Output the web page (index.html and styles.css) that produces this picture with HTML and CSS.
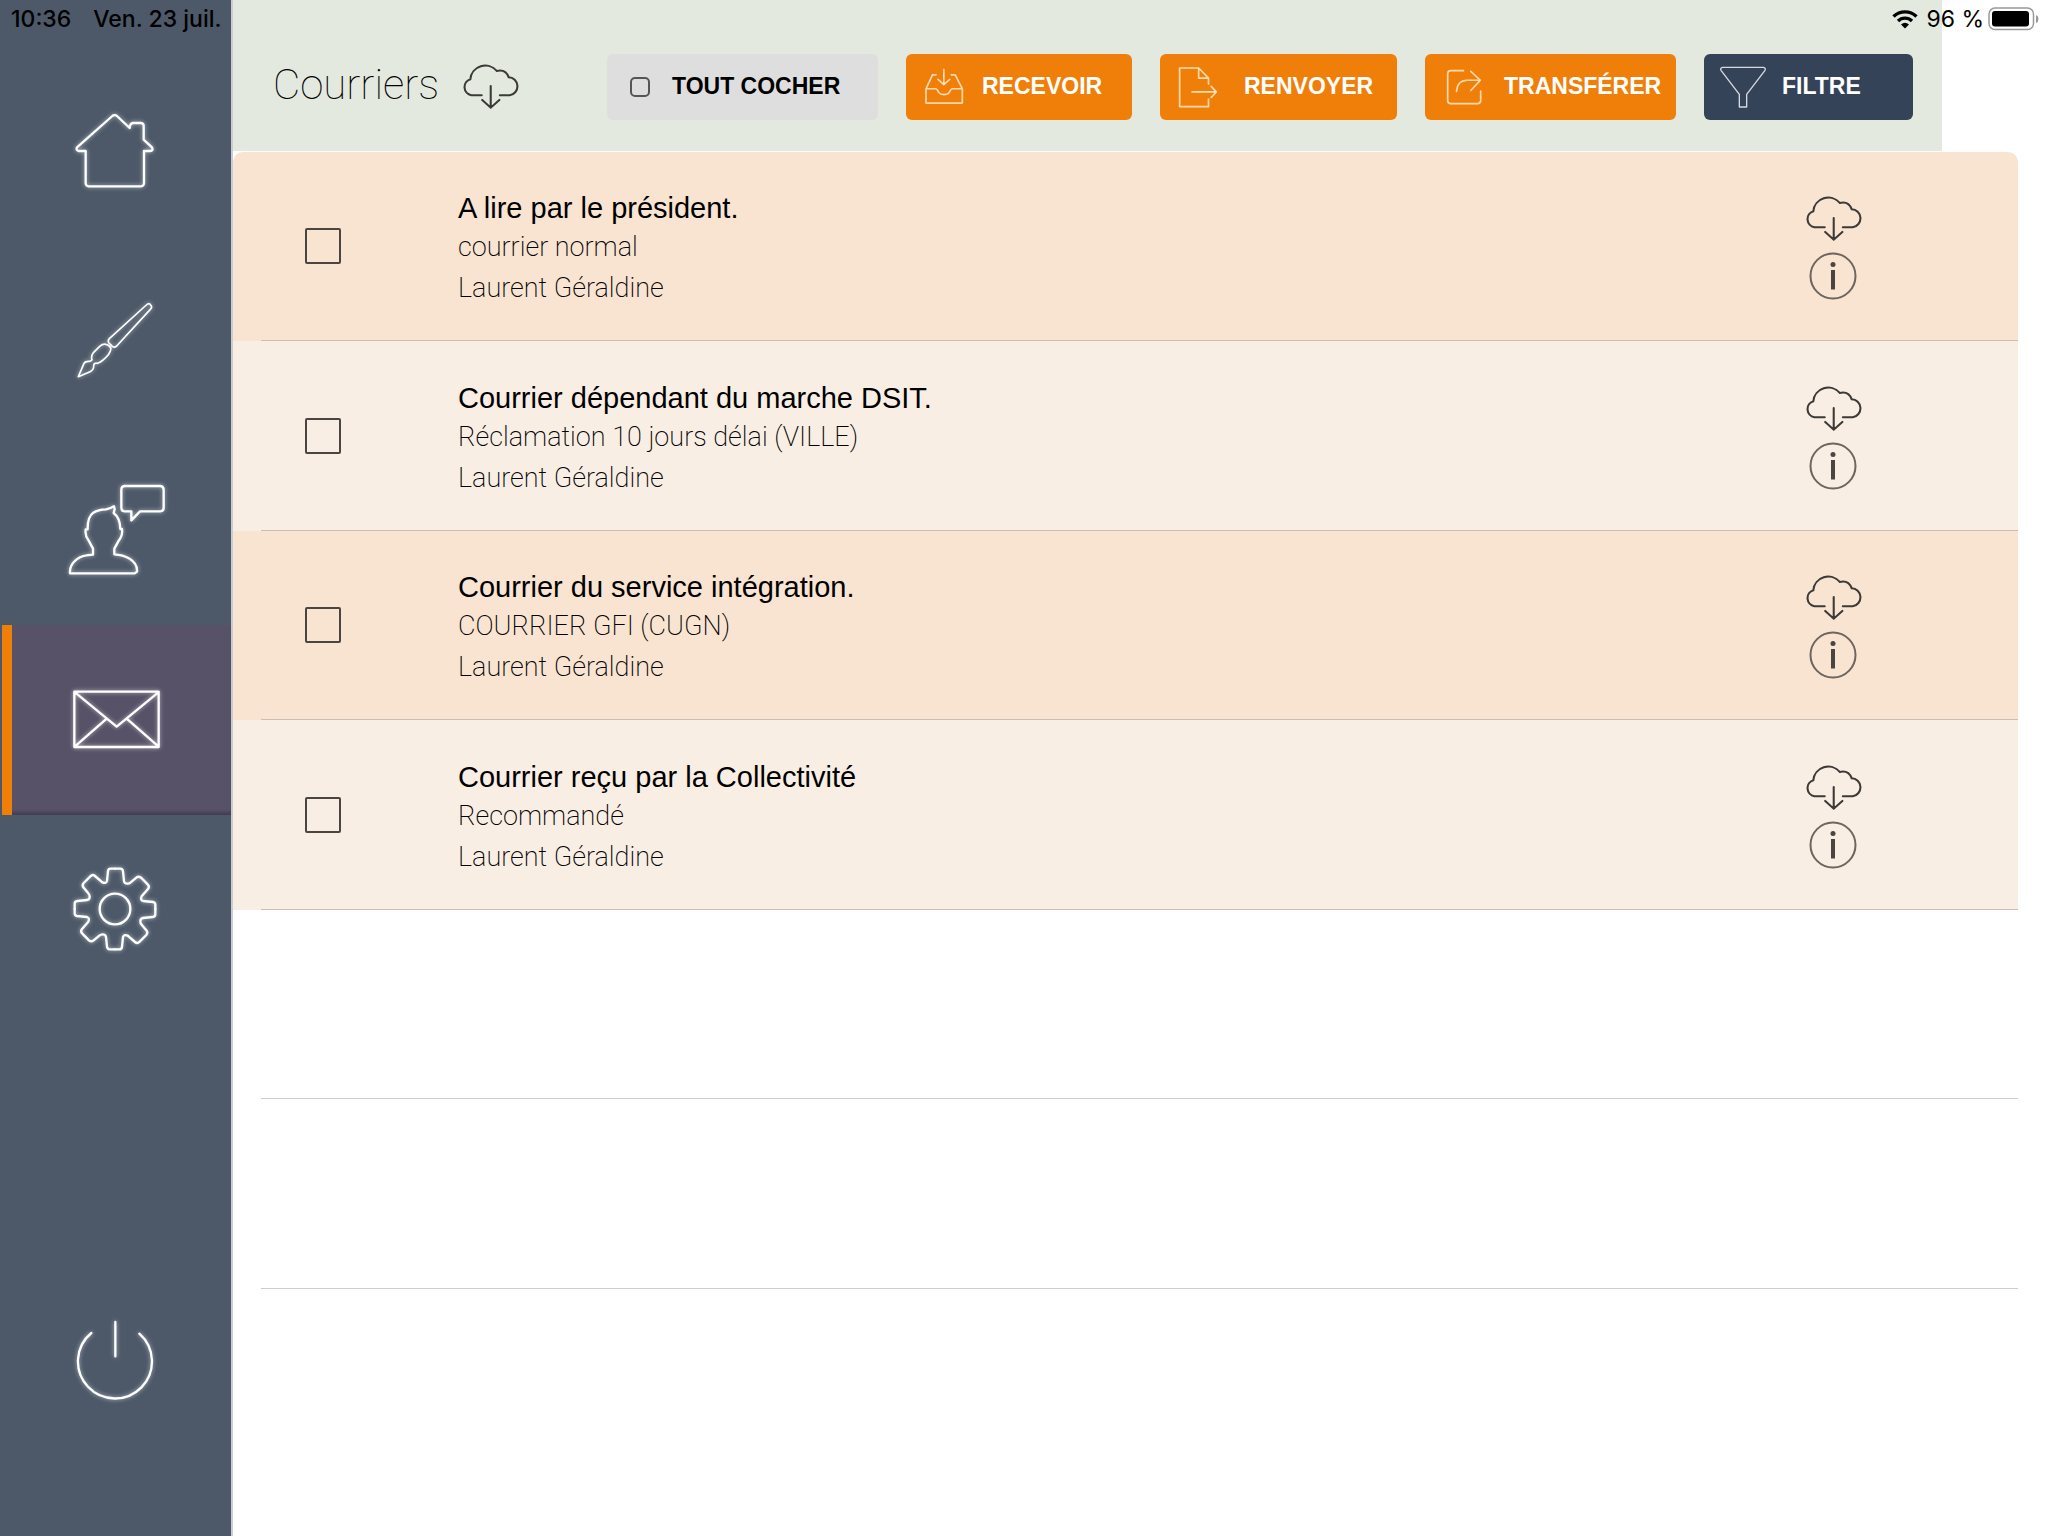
FILE: index.html
```html
<!DOCTYPE html>
<html lang="fr">
<head>
<meta charset="utf-8">
<meta name="viewport" content="width=device-width, initial-scale=1">
<title>Courriers</title>
<link rel="stylesheet" href="styles.css">
</head>
<body>
<svg class="sprite" aria-hidden="true">
  <symbol id="cloud" viewBox="0 0 56 44">
    <path d="M20 30H10A8 8 0 0 1 9 14.500A14.500 14.500 0 0 1 34.500 6.500Q43 4.500 46 12.500A8.800 8.800 0 0 1 47 30H37.500M28.700 21V42M20.500 34.500L28.700 42L37 34.500"/>
  </symbol>
  <symbol id="info" viewBox="0 0 48 48">
    <circle class="ring" cx="24" cy="24" r="22.500"/>
    <circle class="dot" cx="24" cy="12.500" r="2.500"/>
    <path class="dot" d="M22 18H26V37.500H22Z"/>
  </symbol>
</svg>

<div class="status">
  <span class="status-time">10:36</span>
  <span class="status-date">Ven. 23 juil.</span>
  <span class="status-right">
    <svg class="wifi" viewBox="0 0 26 20" aria-hidden="true">
      <path d="M1.500 7.500A16.500 16.500 0 0 1 24.500 7.500M6 12A10 10 0 0 1 20 12" fill="none" stroke="#000" stroke-width="3.400"/>
      <path d="M13 19.500L9 15.500Q13 12 17 15.500Z"/>
    </svg>
    <span>96 %</span>
    <svg class="battery" viewBox="0 0 51 24" aria-hidden="true">
      <rect x="1" y="1" width="44.500" height="21.500" rx="6" fill="#fff" stroke="#999" stroke-width="1.500"/>
      <rect x="4" y="4" width="37" height="15.500" rx="3"/>
      <path d="M48 8Q50.500 9 50.500 12T48 16Z" fill="#999"/>
    </svg>
  </span>
</div>

<div class="app">
  <nav class="sidebar" aria-label="Navigation">
    <a class="nav-item" href="#accueil" aria-label="Accueil">
      <svg width="90" height="84" viewBox="90 86 270 252"><path d="M217 107Q224 102 231 107L269 143Q270 129 279 128H303Q311 129 311 137V178L336 201Q341 211 330 212H312V309Q311 317 303 318H146Q138 317 137 309V212H117Q107 210 111 201Z"/></svg>
    </a>
    <a class="nav-item" href="#signature" aria-label="Signature">
      <svg width="80" height="80" viewBox="104 660 240 240"><path class="fine" d="M318 675Q326 667 331 675Q337 681 330 688L229 798Q222 804 216 799L206 789Q201 783 207 776ZM196 793Q188 791 178 799L160 817Q151 828 155 839Q151 845 144 844Q134 844 131 850L114 890L149 875Q161 870 160 856Q162 848 172 850Q188 843 204 824Q214 809 211 803Q204 793 196 793Z"/></svg>
    </a>
    <a class="nav-item" href="#contacts" aria-label="Contacts">
      <svg width="100" height="96" viewBox="195 65 300 288"><path d="M373 77H481Q491 78 491 88V142Q491 152 481 153H420L394 180V153H373Q364 152 364 142V88Q364 78 373 77ZM210 339Q208 315 229 298Q246 284 279 283V265L266 241Q254 225 257 207H263Q262 170 280 157Q294 148 318 147Q333 144 342 138L344 146L341 158Q360 172 361 206H366Q369 226 355 243L343 265V282Q369 283 389 295Q413 310 411 334L404 339Z"/></svg>
    </a>
    <a class="nav-item active" href="#courriers" aria-label="Courriers" aria-current="page">
      <svg width="96" height="64" viewBox="204 681 288 192"><path d="M223 695H476V861H223ZM225 697L350 800L475 697M225 859L320 776M475 859L380 776"/></svg>
    </a>
    <a class="nav-item" href="#reglages" aria-label="Réglages">
      <svg width="90" height="90" viewBox="89 73 270 270">
        <defs><path id="tooth" d="M224 87H240Q247 87 248 95L251 124Q252 132 261 132Q267 132 271 128L288 114Q295 108 302 114L322 134Q329 141 323 148L304 170Q299 181 308 184L338 187Q345 188 345 195V208"/></defs>
        <use href="#tooth"/><use href="#tooth" transform="rotate(90 224 208)"/><use href="#tooth" transform="rotate(180 224 208)"/><use href="#tooth" transform="rotate(270 224 208)"/>
        <circle cx="224" cy="208" r="46"/>
      </svg>
    </a>
    <button class="nav-item power" type="button" aria-label="Déconnexion">
      <svg width="84" height="88" viewBox="98 50 252 264"><path d="M225 68V171M153 101A111 111 0 1 0 297 103"/></svg>
    </button>
  </nav>

  <main class="main">
    <header class="toolbar">
      <h1>Courriers</h1>
      <button class="icon-btn" type="button" aria-label="Tout télécharger"><svg class="cloud"><use href="#cloud"/></svg></button>
      <div class="actions">
        <label class="btn check-all"><input type="checkbox">TOUT COCHER</label>
        <button class="btn receive" type="button">
          <svg width="40" height="38" viewBox="972 66 123 117"><path d="M1009 87H998L978 130V174H1090V130L1068 87H1056M978 130H1008Q1014 132 1017 141Q1022 148 1033 148Q1045 148 1050 141Q1053 132 1059 130H1090M1033 70V117M1015 101L1033 117L1051 101"/></svg>RECEVOIR</button>
        <button class="btn resend" type="button">
          <svg width="40" height="42" viewBox="86 57 120 128"><path d="M178 112V94L148 63H90V181H178V158M148 63V94H178M128 136H202M186 119L202 136L186 153"/></svg>RENVOYER</button>
        <button class="btn transfer" type="button">
          <svg width="36" height="36" viewBox="890 69 109 109"><path d="M943 74H905Q895 74 895 84V164Q895 174 905 174H985Q995 174 995 164V136M922 137Q924 103 955 103H993M965 76L994 103L965 134"/></svg>TRANSFÉRER</button>
        <button class="btn filter" type="button">
          <svg width="46" height="42" viewBox="182 195 138 126"><path d="M190 199H312Q320 201 317 208L262 280V318H240V280L185 208Q182 201 190 199Z"/></svg>FILTRE</button>
      </div>
    </header>

    <ul class="list">
      <li class="row"><div class="row-body">
        <input type="checkbox" id="c1">
        <label class="text" for="c1"><strong>A lire par le président.</strong><span>courrier normal</span><span>Laurent Géraldine</span></label>
        <div class="row-actions"><button class="icon-btn" type="button" aria-label="Télécharger"><svg class="cloud"><use href="#cloud"/></svg></button><button class="icon-btn" type="button" aria-label="Informations"><svg class="info"><use href="#info"/></svg></button></div>
      </div></li>
      <li class="row"><div class="row-body">
        <input type="checkbox" id="c2">
        <label class="text" for="c2"><strong>Courrier dépendant du marche DSIT.</strong><span>Réclamation 10 jours délai (VILLE)</span><span>Laurent Géraldine</span></label>
        <div class="row-actions"><button class="icon-btn" type="button" aria-label="Télécharger"><svg class="cloud"><use href="#cloud"/></svg></button><button class="icon-btn" type="button" aria-label="Informations"><svg class="info"><use href="#info"/></svg></button></div>
      </div></li>
      <li class="row"><div class="row-body">
        <input type="checkbox" id="c3">
        <label class="text" for="c3"><strong>Courrier du service intégration.</strong><span>COURRIER GFI (CUGN)</span><span>Laurent Géraldine</span></label>
        <div class="row-actions"><button class="icon-btn" type="button" aria-label="Télécharger"><svg class="cloud"><use href="#cloud"/></svg></button><button class="icon-btn" type="button" aria-label="Informations"><svg class="info"><use href="#info"/></svg></button></div>
      </div></li>
      <li class="row"><div class="row-body">
        <input type="checkbox" id="c4">
        <label class="text" for="c4"><strong>Courrier reçu par la Collectivité</strong><span>Recommandé</span><span>Laurent Géraldine</span></label>
        <div class="row-actions"><button class="icon-btn" type="button" aria-label="Télécharger"><svg class="cloud"><use href="#cloud"/></svg></button><button class="icon-btn" type="button" aria-label="Informations"><svg class="info"><use href="#info"/></svg></button></div>
      </div></li>
      <li class="row empty"><div class="row-body"></div></li>
      <li class="row empty"><div class="row-body"></div></li>
    </ul>
  </main>
</div>
</body>
</html>
```
FILE: styles.css
```css
* { box-sizing: border-box; }

body {
  margin: 0;
  background: #fff;
  color: #000;
  font-family: "Liberation Sans", Arial, sans-serif;
}

button, input { margin: 0; font: inherit; color: inherit; }
button { border: 0; padding: 0; background: none; cursor: pointer; }

.sprite { position: absolute; width: 0; height: 0; }

/* System status bar, laid over the page */
.status {
  position: absolute;
  top: 0;
  left: 0;
  right: 0;
  z-index: 1;
  display: flex;
  align-items: center;
  height: 38px;
  padding: 0 9px 0 11px;
  font: 500 23px/38px Inter, sans-serif;
}
.status-date { margin-left: 22px; }
.status-right {
  display: flex;
  align-items: center;
  margin-left: auto;
  gap: 4px;
  font-weight: 400;
}
.wifi { width: 26px; height: 20px; margin-right: 4px; }
.battery { width: 51px; height: 24px; }

.app { display: flex; min-height: 100vh; }

/* Sidebar */
.sidebar {
  display: flex;
  flex-direction: column;
  flex: none;
  width: 233px;
  padding: 57px 0 80px;
  background: #4d5969;
  border-right: 2px solid #c9cdd2;
}
.nav-item {
  display: flex;
  align-items: center;
  justify-content: center;
  height: 189px;
  padding: 0 2px 2px 0;
}
.nav-item:nth-child(even) { height: 190px; }
.nav-item svg {
  fill: none;
  stroke: #fff;
  stroke-width: 7;
  stroke-linecap: round;
  stroke-linejoin: round;
  filter: drop-shadow(0 0 2px rgba(255, 255, 255, .6));
}
.nav-item svg .fine { stroke-width: 5; }
.nav-item.active {
  margin-left: 2px;
  background: #575267;
  box-shadow: inset 10px 0 #f07f09, inset 0 -4px 3px -1px #443f54;
}
.power { margin-top: auto; }

/* Toolbar */
.main { flex: 1; min-width: 0; }
.toolbar {
  display: flex;
  align-items: center;
  height: 152px;
  margin-right: 106px;
  padding: 22px 29px 0 40px;
  background: #e3e9df;
  border-bottom: 1px solid #fff;
}
h1 {
  margin: 0 22px 4px 0;
  font: 100 42px/52px Roboto, sans-serif;
}
.icon-btn { display: block; line-height: 0; }
.cloud, .info { fill: none; stroke: #3c3a38; stroke-width: 2; stroke-linecap: round; }
.cloud { width: 58px; height: 46px; }
.info { width: 48px; height: 48px; }
.ring { stroke: #6e655e; }
.dot { fill: #4a4541; stroke: none; }

.actions { display: flex; gap: 28px; margin-left: auto; }
.btn {
  display: flex;
  align-items: center;
  height: 66px;
  border-radius: 6px;
  background: #f07f09;
  color: #fff;
  font-size: 23px;
  font-weight: 700;
  white-space: nowrap;
}
.btn svg {
  flex: none;
  fill: none;
  stroke: #ffdcb0;
  stroke-width: 5;
  stroke-linecap: round;
  stroke-linejoin: round;
}
.check-all { width: 271px; padding-left: 23px; gap: 22px; background: #dedede; color: #000; }
.receive { width: 226px; padding-left: 18px; gap: 18px; }
.resend { width: 237px; padding-left: 18px; gap: 26px; }
.transfer { width: 251px; padding-left: 21px; gap: 22px; }
.filter { width: 209px; padding-left: 16px; gap: 16px; background: #344358; }
.btn.filter svg { stroke: #d5dae0; stroke-width: 4; }

input[type="checkbox"] {
  flex: none;
  appearance: none;
  width: 36px;
  height: 36px;
  border: 2px solid #4a4541;
  border-radius: 2px;
}
.check-all input[type="checkbox"] { width: 20px; height: 20px; border-color: #555; border-radius: 5px; }

/* Mail list */
.list {
  margin: 0 30px 0 0;
  padding: 0;
  list-style: none;
  border-radius: 10px 10px 0 0;
  overflow: hidden;
}
.row { display: flex; height: 189px; padding-left: 28px; background: #f8e4d1; }
.row:nth-child(even) { height: 190px; background: #f9eee4; }
.row.empty { background: #fff; }
.row-body {
  display: flex;
  flex: 1;
  align-items: center;
  padding: 0 156px 0 44px;
  border-bottom: 1px solid #cbbeb5;
}
.empty .row-body { border-color: #cdcdcd; }
.text {
  display: flex;
  flex-direction: column;
  flex: 1;
  margin-left: 117px;
  padding-top: 6px;
  font: 200 27px/41px Roboto, sans-serif;
}
.text strong { font: 400 29px/38px "Liberation Sans", Arial, sans-serif; }
.row-actions { display: flex; flex-direction: column; align-items: center; gap: 10px; padding-top: 4px; }
```
